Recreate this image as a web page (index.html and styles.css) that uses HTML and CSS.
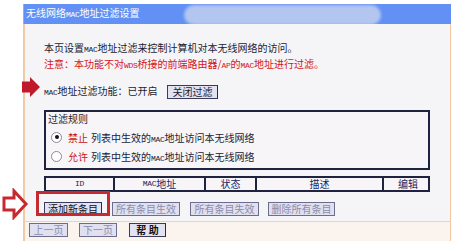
FILE: index.html
```html
<!DOCTYPE html>
<html lang="zh">
<head>
<meta charset="utf-8">
<link rel="stylesheet" href="styles.css">
</head>
<body>
<div class="page">
  <div class="panel">
    <div class="titlebar">
      <span class="title">无线网络<span class="mac">MAC</span>地址过滤设置</span>
      <span class="blob"></span>
    </div>
    <div class="content">
      <p class="intro">本页设置<span class="mac">MAC</span>地址过滤来控制计算机对本无线网络的访问。</p>
      <p class="note">注意：本功能不对<span class="mac">WDS</span>桥接的前端路由器/<span class="mac">AP</span>的<span class="mac">MAC</span>地址进行过滤。</p>
      <div class="status">
        <span class="status-text"><span class="mac">MAC</span>地址过滤功能：已开启</span>
        <span class="btn btn-close">关闭过滤</span>
      </div>
      <div class="rules">
        <div class="rules-title">过滤规则</div>
        <div class="rule">
          <span class="radio checked"></span>
          <span class="rule-key">禁止</span>
          <span class="rule-desc">列表中生效的<span class="mac">MAC</span>地址访问本无线网络</span>
        </div>
        <div class="rule second">
          <span class="radio"></span>
          <span class="rule-key">允许</span>
          <span class="rule-desc">列表中生效的<span class="mac">MAC</span>地址访问本无线网络</span>
        </div>
      </div>
      <div class="table">
        <div class="th c-id"><span class="mac">ID</span></div>
        <div class="th c-mac"><span class="mac">MAC</span>地址</div>
        <div class="th c-state">状态</div>
        <div class="th c-desc">描述</div>
        <div class="th c-edit">编辑</div>
      </div>
      <div class="actions">
        <span class="btn btn-add">添加新条目</span>
        <span class="btn disabled w68">所有条目生效</span>
        <span class="btn disabled w69">所有条目失效</span>
        <span class="btn disabled w67">删除所有条目</span>
      </div>
    </div>
    <div class="footer">
      <span class="btn disabled w39">上一页</span>
      <span class="btn disabled w38">下一页</span>
      <span class="btn btn-help">帮 助</span>
    </div>
  </div>

  <svg class="arrow-filled" width="18" height="20" viewBox="0 0 18 20">
    <polygon points="0,4.5 8,4.5 8,0 18,10 8,20 8,15.5 0,15.5" fill="#c01a2a"/>
  </svg>
  <svg class="arrow-outline" width="28" height="32" viewBox="0 0 28 32">
    <polygon points="3,10 13,10 13,3 25,16 13,29 13,22 3,22" fill="#fff" stroke="#c62a30" stroke-width="3" stroke-linejoin="miter"/>
  </svg>
  <span class="highlight"></span>
</div>
</body>
</html>
```
FILE: styles.css
```css
* { box-sizing: border-box; }
html, body { margin: 0; padding: 0; background: #ffffff; }
body {
  font-family: "Noto Sans CJK SC", "Noto Sans", sans-serif;
  font-size: 10px;
  color: #1c1c34;
}
.page {
  position: relative;
  width: 466px;
  height: 247px;
  padding: 4px 0 0 23px;
}
.panel {
  width: 428px;
}
.mac {
  font-family: "Liberation Mono", "DejaVu Sans Mono", monospace;
  font-size: 8px;
  letter-spacing: -0.3px;
}
.titlebar {
  position: relative;
  height: 20px;
  background: #6290f4;
  border-left: 1px solid #8fb0f0;
  display: flex;
  align-items: center;
  padding-left: 2px;
  overflow: hidden;
}
.title {
  position: relative;
  z-index: 1;
  color: #ffffff;
  font-size: 10px;
  line-height: 14px;
}
.blob {
  position: absolute;
  left: 160px;
  top: 1px;
  width: 197px;
  height: 20px;
  border-radius: 10px;
  background: #b2c6ef;
  filter: blur(1.5px);
}
.content {
  background: #f5f5f7;
  border-left: 2px solid #f0cba8;
  border-right: 1px solid #efc8a2;
  padding: 17px 0 5px 19px;
}
.intro, .note {
  margin: 0;
  line-height: 14px;
  white-space: nowrap;
}
.note { color: #d4141c; }
.status {
  margin-top: 12px;
  display: flex;
  align-items: center;
  height: 14px;
}
.status-text { width: 123px; line-height: 14px; }
.btn {
  display: inline-flex;
  align-items: center;
  justify-content: center;
  height: 14px;
  line-height: 12px;
  background: #e2e2f2;
  border: 1px solid #3a3a5a;
  border-right-color: #2a2a48;
  color: #1c1c34;
  font-size: 10px;
  white-space: nowrap;
}
.btn-close { width: 51px; }
.rules {
  margin-top: 11px;
  width: 386px;
  height: 60px;
  border: 2px solid #1f2340;
  background: #f7f5f8;
  padding: 0 0 0 2px;
}
.rules-title { line-height: 14px; height: 14px; }
.rule {
  display: flex;
  align-items: center;
  height: 14px;
  margin-top: 4px;
  padding-left: 3px;
}
.rule.second { margin-top: 5px; }
.radio {
  width: 11px;
  height: 11px;
  border-radius: 50%;
  border: 1px solid #8a8a9a;
  background: #ffffff;
  position: relative;
  margin-right: 6px;
}
.radio.checked::after {
  content: "";
  position: absolute;
  left: 2.5px;
  top: 2.5px;
  width: 4px;
  height: 4px;
  border-radius: 50%;
  background: #111;
}
.rule-key { color: #c8141c; width: 23px; }
.rule-desc { white-space: nowrap; }
.table {
  margin-top: 6px;
  width: 386px;
  height: 16px;
  display: grid;
  grid-template-columns: 69px 91px 51px 127px 48px;
  border: 2px solid #1f2340;
  background: #f7f5f8;
}
.th {
  display: flex;
  align-items: center;
  justify-content: center;
  border-right: 2px solid #1f2340;
  color: #1a2660;
  line-height: 12px;
}
.th.c-edit { border-right: none; }
.actions {
  margin-top: 10px;
  display: flex;
  height: 14px;
  gap: 10px;
}
.btn-add { width: 58px; color: #111; }
.btn.disabled {
  color: #8c8ca8;
  border-color: #6c6c8c;
  background: #e0e0f0;
}
.w68 { width: 68px; }
.w69 { width: 69px; margin-right: -1px; }
.w67 { width: 67px; }
.w39 { width: 39px; }
.w38 { width: 38px; }
.footer {
  background: #fbf3ee;
  border-top: 1px solid #edd2b6;
  border-left: 2px solid #f0cba8;
  border-right: 1px solid #efc8a2;
  height: 20px;
  padding: 1px 0 0 4px;
  display: flex;
  gap: 11px;
}
.btn-help { width: 37px; font-weight: bold; color: #111; margin-left: 1px; }
.arrow-filled {
  position: absolute;
  left: 22px;
  top: 77px;
}
.arrow-outline {
  position: absolute;
  left: 1px;
  top: 188px;
}
.highlight {
  position: absolute;
  left: 36px;
  top: 191px;
  width: 74px;
  height: 25px;
  border: 3px solid #c42a30;
}
```
